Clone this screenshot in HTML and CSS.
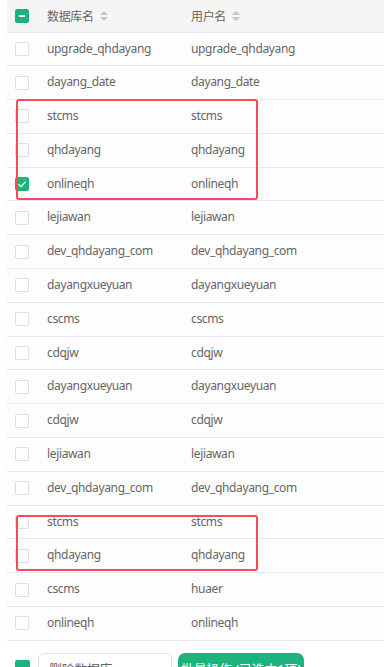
FILE: index.html
```html
<!DOCTYPE html>
<html lang="zh">
<head>
<meta charset="utf-8">
<link rel="stylesheet" href="styles.css">
</head>
<body>
<div class="wrap">
  <table class="tbl">
    <thead>
      <tr>
        <th class="c-check"><span class="cb cb-ind"></span></th>
        <th class="c-db"><span class="th-label">数据库名<span class="sort"><i class="up"></i><i class="down"></i></span></span></th>
        <th class="c-user"><span class="th-label">用户名<span class="sort"><i class="up"></i><i class="down"></i></span></span></th>
      </tr>
    </thead>
    <tbody>
      <tr><td class="c-check"><span class="cb"></span></td><td>upgrade_qhdayang</td><td>upgrade_qhdayang</td></tr>
      <tr><td class="c-check"><span class="cb"></span></td><td>dayang_date</td><td>dayang_date</td></tr>
      <tr><td class="c-check"><span class="cb"></span></td><td>stcms</td><td>stcms</td></tr>
      <tr><td class="c-check"><span class="cb"></span></td><td>qhdayang</td><td>qhdayang</td></tr>
      <tr><td class="c-check"><span class="cb cb-on"><svg viewBox="0 0 14 14" width="14" height="14"><path d="M3.5 7.2 L6 9.6 L10.6 4.6" fill="none" stroke="#fff" stroke-width="1.3"/></svg></span></td><td>onlineqh</td><td>onlineqh</td></tr>
      <tr><td class="c-check"><span class="cb"></span></td><td>lejiawan</td><td>lejiawan</td></tr>
      <tr><td class="c-check"><span class="cb"></span></td><td>dev_qhdayang_com</td><td>dev_qhdayang_com</td></tr>
      <tr><td class="c-check"><span class="cb"></span></td><td>dayangxueyuan</td><td>dayangxueyuan</td></tr>
      <tr><td class="c-check"><span class="cb"></span></td><td>cscms</td><td>cscms</td></tr>
      <tr><td class="c-check"><span class="cb"></span></td><td>cdqjw</td><td>cdqjw</td></tr>
      <tr><td class="c-check"><span class="cb"></span></td><td>dayangxueyuan</td><td>dayangxueyuan</td></tr>
      <tr><td class="c-check"><span class="cb"></span></td><td>cdqjw</td><td>cdqjw</td></tr>
      <tr><td class="c-check"><span class="cb"></span></td><td>lejiawan</td><td>lejiawan</td></tr>
      <tr><td class="c-check"><span class="cb"></span></td><td>dev_qhdayang_com</td><td>dev_qhdayang_com</td></tr>
      <tr><td class="c-check"><span class="cb"></span></td><td>stcms</td><td>stcms</td></tr>
      <tr><td class="c-check"><span class="cb"></span></td><td>qhdayang</td><td>qhdayang</td></tr>
      <tr><td class="c-check"><span class="cb"></span></td><td>cscms</td><td>huaer</td></tr>
      <tr><td class="c-check"><span class="cb"></span></td><td>onlineqh</td><td>onlineqh</td></tr>
    </tbody>
  </table>
  <div class="mark mark-1"></div>
  <div class="mark mark-2"></div>
  <div class="footer">
    <span class="cb cb-on cb-foot"></span>
    <div class="select">
      <span class="select-text">删除数据库</span>
      <svg class="chev" viewBox="0 0 12 12" width="12" height="12"><path d="M3 4.5 L6 7.5 L9 4.5" fill="none" stroke="#b0b3b8" stroke-width="1.2"/></svg>
    </div>
    <button class="btn">批量操作 (已选中1项)</button>
  </div>
</div>
</body>
</html>
```

FILE: styles.css
```css
html, body {
  margin: 0;
  padding: 0;
  background: #ffffff;
}
body {
  font-family: "Noto Sans", "Noto Sans CJK SC", sans-serif;
  font-size: 12px;
  letter-spacing: -0.35px;
  color: #666666;
  width: 385px;
  height: 667px;
  overflow: hidden;
}
.wrap {
  position: relative;
  padding-left: 7px;
  padding-right: 1px;
}
.tbl {
  width: 377px;
  border-collapse: collapse;
  table-layout: fixed;
}
.tbl th {
  height: 32px;
  padding: 0;
  background: #f5f5f6;
  font-weight: normal;
  text-align: left;
  color: #666;
  border-bottom: 1px solid #e6e7ef;
  box-sizing: border-box;
}
.tbl td {
  padding: 6px 0;
  line-height: 20.8px;
  background: #fdfdfe;
  border-bottom: 1px solid #e6e7ef;
  white-space: nowrap;
}
.c-check {
  width: 40px;
  padding-left: 8px !important;
  box-sizing: border-box;
}
.c-db {
  width: 144px;
}
.tbl td.c-check, .tbl th.c-check {
  line-height: 0;
  vertical-align: middle;
}
.th-label {
  display: inline-flex;
  align-items: center;
  gap: 6px;
}
.sort {
  display: inline-flex;
  flex-direction: column;
  gap: 2px;
}
.sort i {
  display: block;
  width: 0;
  height: 0;
  border-left: 4px solid transparent;
  border-right: 4px solid transparent;
}
.sort .up { border-bottom: 4px solid #c4c6cc; }
.sort .down { border-top: 4px solid #c4c6cc; }
.cb {
  display: inline-block;
  width: 14px;
  height: 14px;
  box-sizing: border-box;
  border: 1px solid #dcdee3;
  border-radius: 2px;
  background: #fff;
  vertical-align: middle;
  position: relative;
}
.cb-on, .cb-ind {
  background: #1db37d;
  border-color: #1db37d;
}
.cb-on svg {
  position: absolute;
  left: -1px;
  top: -1px;
}
.cb-ind::after {
  content: "";
  position: absolute;
  left: 3px;
  right: 3px;
  top: 5px;
  height: 2px;
  background: #fff;
}
.mark {
  position: absolute;
  left: 16px;
  width: 242px;
  border: 2px solid #f24c5e;
  border-radius: 3px;
  box-sizing: border-box;
}
.mark-1 {
  top: 99px;
  height: 101px;
}
.mark-2 {
  top: 515px;
  height: 56px;
}
.footer {
  display: flex;
  align-items: flex-start;
  padding: 12px 0 0 8px;
}
.cb-foot {
  margin-top: 7px;
  width: 15px;
  height: 15px;
}
.select {
  margin-left: 8px;
  width: 134px;
  height: 32px;
  box-sizing: border-box;
  border: 1px solid #dcdfe6;
  border-radius: 6px;
  display: flex;
  align-items: center;
  justify-content: space-between;
  padding: 0 10px;
  background: #fff;
}
.select-text {
  color: #606266;
  font-size: 13px;
}
.btn {
  margin-left: 6px;
  height: 32px;
  width: 126px;
  border: none;
  border-radius: 7px;
  background: #1db37d;
  color: #fff;
  font-family: "Noto Sans", "Noto Sans CJK SC", sans-serif;
  font-size: 13px;
  letter-spacing: -0.2px;
  padding: 0;
}
```
